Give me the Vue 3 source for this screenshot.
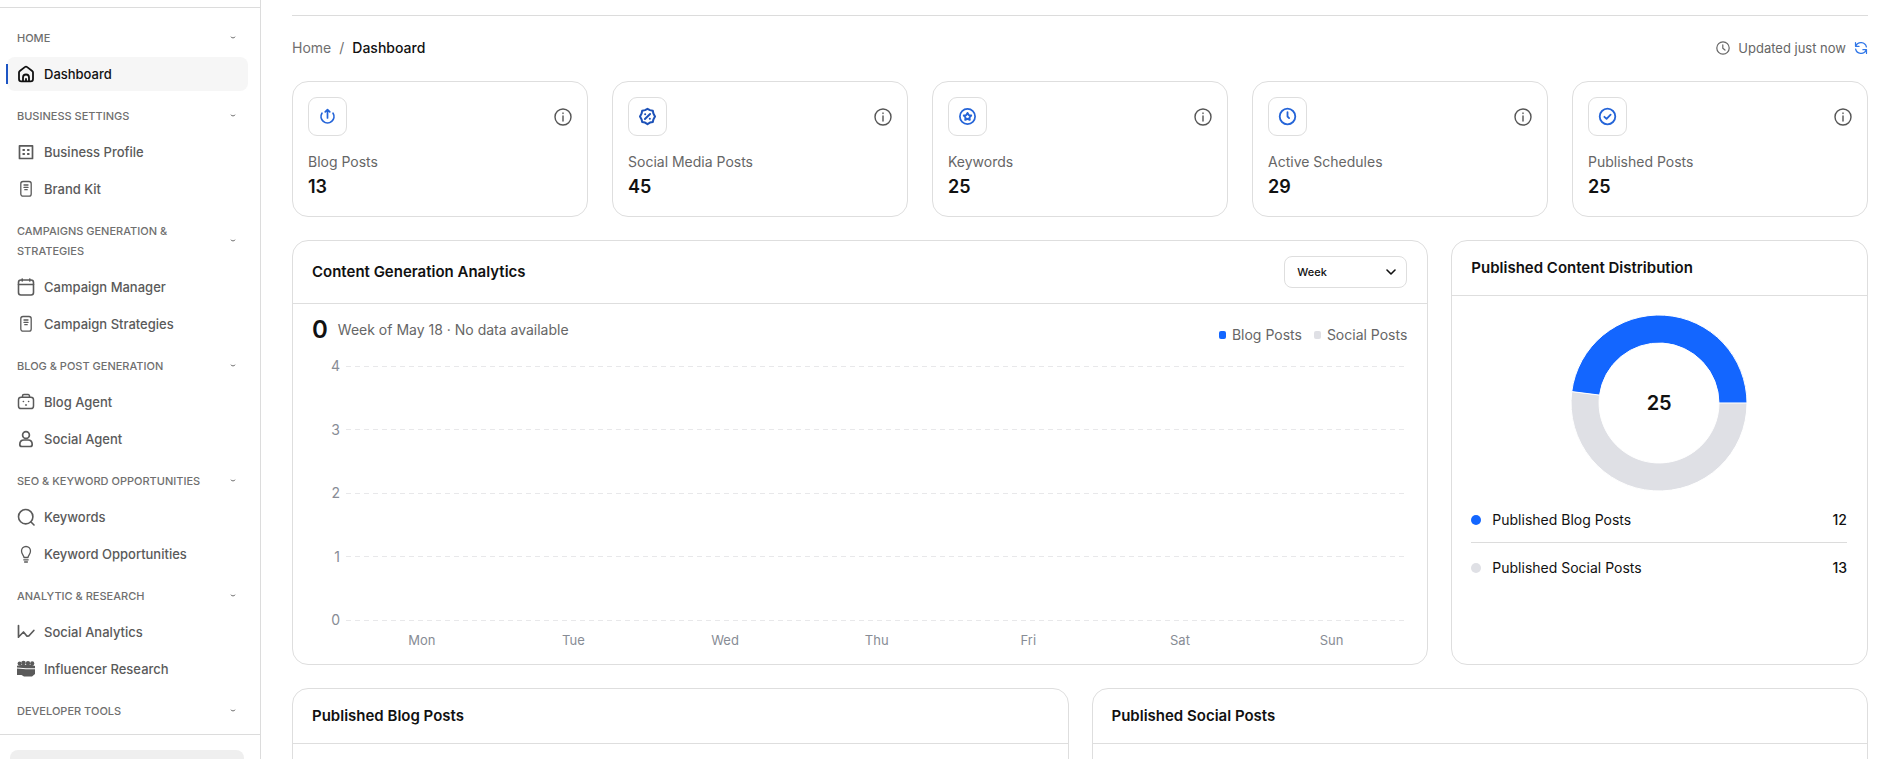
<script setup>
import { computed, ref } from 'vue'

const sections = [
  { title: 'Home', items: [{ label: 'Dashboard', icon: 'home', active: true }] },
  {
    title: 'Business Settings',
    items: [
      { label: 'Business Profile', icon: 'building' },
      { label: 'Brand Kit', icon: 'document' }
    ]
  },
  {
    title: 'Campaigns Generation & Strategies',
    items: [
      { label: 'Campaign Manager', icon: 'calendar' },
      { label: 'Campaign Strategies', icon: 'document' }
    ]
  },
  {
    title: 'Blog & Post Generation',
    items: [
      { label: 'Blog Agent', icon: 'bot' },
      { label: 'Social Agent', icon: 'user' }
    ]
  },
  {
    title: 'SEO & Keyword Opportunities',
    items: [
      { label: 'Keywords', icon: 'search' },
      { label: 'Keyword Opportunities', icon: 'bulb' }
    ]
  },
  {
    title: 'Analytic & Research',
    items: [
      { label: 'Social Analytics', icon: 'chart' },
      { label: 'Influencer Research', icon: 'people' }
    ]
  },
  { title: 'Developer Tools', items: [] }
]

const stats = [
  { label: 'Blog Posts', value: 13, icon: 'upload' },
  { label: 'Social Media Posts', value: 45, icon: 'percent' },
  { label: 'Keywords', value: 25, icon: 'star' },
  { label: 'Active Schedules', value: 29, icon: 'clock' },
  { label: 'Published Posts', value: 25, icon: 'check' }
]

const ticks = [4, 3, 2, 1, 0]
const days = ['Mon', 'Tue', 'Wed', 'Thu', 'Fri', 'Sat', 'Sun']
const period = ref('Week')

const distribution = [
  { label: 'Published Blog Posts', value: 12, tone: 'blue' },
  { label: 'Published Social Posts', value: 13, tone: 'gray' }
]

const total = computed(() => distribution.reduce((sum, row) => sum + row.value, 0))

// Ring segments run counter-clockwise, starting at three o'clock
const segments = computed(() => {
  let start = 0
  return distribution.map((row) => {
    const end = start + (row.value / total.value) * 2 * Math.PI
    const point = (radius, angle) =>
      `${88 + radius * Math.cos(angle)} ${88 - radius * Math.sin(angle)}`
    const large = end - start > Math.PI ? 1 : 0
    const d = `M${point(88, start)} A88 88 0 ${large} 0 ${point(88, end)} L${point(60, end)} A60 60 0 ${large} 1 ${point(60, start)} Z`
    start = end
    return { tone: row.tone, d }
  })
})
</script>

<template>
  <div class="layout">
    <aside class="sidebar">
      <div class="sidebar-top"></div>
      <nav class="nav">
        <section v-for="section in sections" :key="section.title" class="nav-section">
          <button type="button" class="nav-heading">
            <span>{{ section.title }}</span>
            <svg class="nav-chevron" viewBox="0 0 6 4"><path d="M1 1c1 1.3 3 1.3 4 0" /></svg>
          </button>
          <ul v-if="section.items.length" class="nav-list">
            <li v-for="item in section.items" :key="item.label">
              <a href="#" class="nav-item" :class="{ active: item.active }">
                <svg class="nav-icon" viewBox="0 0 18 18" aria-hidden="true">
                  <g v-if="item.icon === 'home'" stroke-width="1.8">
                    <path d="M2 7.6a2 2 0 0 1 .8-1.6l5-3.9a2 2 0 0 1 2.4 0l5 3.9a2 2 0 0 1 .8 1.6V14a2.4 2.4 0 0 1-2.4 2.4H4.4A2.4 2.4 0 0 1 2 14z" />
                    <path d="M6 16.2V12.500a3 3 0 0 1 6 0v3.700M9 14v2" />
                  </g>
                  <g v-else-if="item.icon === 'building'">
                    <path d="M2.500 2.800h13v12.700h-13z" stroke-width="1.700" />
                    <path d="M6.200 7h1M10.800 7h1M6.200 11h1M10.800 11h1" stroke-width="1.800" />
                  </g>
                  <g v-else-if="item.icon === 'document'" stroke-width="1.300">
                    <rect x="3.800" y="1.500" width="10.400" height="14.600" rx="2.200" />
                    <path d="M7 5h4M7 7.400h4M7.800 9.700h2.400" />
                  </g>
                  <g v-else-if="item.icon === 'calendar'" stroke-width="1.600">
                    <rect x="1.500" y="2" width="15" height="15" rx="2.400" />
                    <path d="M1.500 6.500h15M5.200 1v2M12.800 1v2" />
                  </g>
                  <g v-else-if="item.icon === 'bot'" stroke-width="1.500">
                    <rect x="1.500" y="4.200" width="15" height="11.300" rx="2.600" />
                    <path d="M5.500 4V3a1.400 1.400 0 0 1 1.400-1.400h4.200A1.400 1.400 0 0 1 12.500 3v1M6.300 8.500h.2M11.500 8.500h.2M8.600 12h.8" />
                  </g>
                  <g v-else-if="item.icon === 'user'" stroke-width="1.700">
                    <circle cx="9" cy="5" r="3.400" />
                    <path d="M2.800 14.500c0-3 2-4.500 4.200-4.500h4c2.200 0 4.200 1.500 4.200 4.500 0 1.300-.8 2-2 2H4.800c-1.200 0-2-.7-2-2z" />
                  </g>
                  <g v-else-if="item.icon === 'search'" stroke-width="1.600">
                    <circle cx="8.700" cy="8.700" r="7.200" />
                    <path d="m14 14 3 3" />
                  </g>
                  <g v-else-if="item.icon === 'bulb'" stroke-width="1.300">
                    <path d="M7 12.500c0-2-2.500-3.200-2.500-6.500a4.500 4.500 0 0 1 9 0c0 3.300-2.500 4.500-2.500 6.500zM6.800 14.800h4.400M7.600 17h2.800" />
                  </g>
                  <g v-else-if="item.icon === 'chart'" stroke-width="1.700">
                    <path d="M1.500 2.500v11.700M1.500 14l5-5 3.500 4.200 2-.4 4.800-5.300" />
                  </g>
                  <g v-else class="solid">
                    <circle cx="2.600" cy="3.400" r="2" /><circle cx="6.500" cy="3" r="2.300" />
                    <circle cx="11" cy="3.200" r="2.200" /><circle cx="15.200" cy="3.400" r="2.100" />
                    <path d="M0 5.800 4 5h11l3 1v2.200H9L0 7.500zM0 8.500l9 .7h9V14l-3 2.500H7L4.500 15H0z" />
                  </g>
                </svg>
                <span>{{ item.label }}</span>
              </a>
            </li>
          </ul>
        </section>
      </nav>
      <div class="sidebar-footer">
        <div class="account"></div>
      </div>
    </aside>

    <main class="main">
      <div class="topbar">
        <nav class="crumbs" aria-label="Breadcrumb">
          <a href="#">Home</a>
          <span>/</span>
          <strong>Dashboard</strong>
        </nav>
        <div class="updated">
          <svg viewBox="0 0 14 14" aria-hidden="true">
            <circle cx="7" cy="7" r="6.200" />
            <path d="M6.800 3.800v3.400L9 9" />
          </svg>
          <span>Updated just now</span>
          <button type="button" class="refresh" aria-label="Refresh">
            <svg viewBox="0 0 14 14">
              <path d="M1.500 1.500v3.800h3.600M1.800 5A5.600 5.600 0 0 1 12.400 6M12.500 12.500V8.700H8.900M12.200 9A5.600 5.600 0 0 1 1.600 8" />
            </svg>
          </button>
        </div>
      </div>

      <div class="stats">
        <article v-for="stat in stats" :key="stat.label" class="card stat">
          <div class="stat-top">
            <span class="stat-badge">
              <svg viewBox="0 0 20 20" aria-hidden="true">
                <g v-if="stat.icon === 'upload'" stroke-width="1.800">
                  <path d="M4.200 6.500a6.800 6.800 0 1 0 11.600 0M10 11.500V2.800M7.600 5.100 10 2.700l2.400 2.400" />
                </g>
                <g v-else-if="stat.icon === 'percent'" class="dark" stroke-width="2.100">
                  <path d="m10 1.900 2.600 1.400 3 .6.600 3L17.900 10l-1.700 3.100-.6 2.700-3 .6L10 18.100l-2.600-1.700-3-.6-.6-2.700L2.100 10l1.700-3.100.6-3 3-.6z" />
                  <path d="m7.300 12.700 5.400-5.400M7.500 7.600h.1M12.400 12.400h.1" />
                </g>
                <g v-else-if="stat.icon === 'star'" stroke-width="1.800">
                  <circle cx="10" cy="10" r="8" />
                  <path d="m10 6.200 1.300 2.300 2.600.5-1.800 1.900.3 2.600L10 12.400l-2.400 1.100.3-2.600L6.100 9l2.600-.5z" stroke-width="2" />
                </g>
                <g v-else-if="stat.icon === 'clock'" stroke-width="1.900">
                  <circle cx="10" cy="10" r="8.200" />
                  <path d="M10 5.500V10l1.700 1.700" />
                </g>
                <g v-else stroke-width="1.900">
                  <circle cx="10" cy="10" r="8.200" />
                  <path d="m6.700 10.300 2.300 2.200 4.300-4.500" />
                </g>
              </svg>
            </span>
            <button type="button" class="info" :aria-label="`About ${stat.label}`">
              <svg viewBox="0 0 18 18">
                <circle cx="9" cy="9" r="8" />
                <path d="M9 8v5M9 5v.5" />
              </svg>
            </button>
          </div>
          <span class="stat-label">{{ stat.label }}</span>
          <strong class="stat-value">{{ stat.value }}</strong>
        </article>
      </div>

      <div class="row analytics-row">
        <section class="card analytics">
          <header class="card-head tall">
            <h2>Content Generation Analytics</h2>
            <div class="select-wrap">
              <select v-model="period" aria-label="Period">
                <option>Week</option>
                <option>Month</option>
                <option>Year</option>
              </select>
              <svg viewBox="0 0 10 6" aria-hidden="true"><path d="m1 1 4 4 4-4" /></svg>
            </div>
          </header>
          <div class="analytics-body">
            <div class="summary">
              <div class="summary-text">
                <strong>0</strong>
                <span>Week of May 18 · No data available</span>
              </div>
              <ul class="legend">
                <li><i class="blue"></i>Blog Posts</li>
                <li><i class="gray"></i>Social Posts</li>
              </ul>
            </div>
            <div class="plot">
              <div v-for="tick in ticks" :key="tick" class="tick">
                <span>{{ tick }}</span>
                <div class="gridline"></div>
              </div>
            </div>
            <div class="days">
              <span v-for="day in days" :key="day">{{ day }}</span>
            </div>
          </div>
        </section>

        <section class="card">
          <header class="card-head">
            <h2>Published Content Distribution</h2>
          </header>
          <div class="distribution-body">
            <div class="donut">
              <svg viewBox="0 0 176 176" aria-hidden="true">
                <path v-for="segment in segments" :key="segment.tone" :class="segment.tone" :d="segment.d" />
              </svg>
              <strong>{{ total }}</strong>
            </div>
            <ul class="breakdown">
              <li v-for="row in distribution" :key="row.label">
                <i :class="row.tone"></i>
                <span>{{ row.label }}</span>
                <b>{{ row.value }}</b>
              </li>
            </ul>
          </div>
        </section>
      </div>

      <div class="row">
        <section class="card posts">
          <header class="card-head"><h2>Published Blog Posts</h2></header>
        </section>
        <section class="card posts">
          <header class="card-head"><h2>Published Social Posts</h2></header>
        </section>
      </div>
    </main>
  </div>
</template>

<style>
body {
  background: #fff;
}
</style>

<style scoped>
* {
  box-sizing: border-box;
}

.layout {
  display: flex;
  height: 100vh;
  overflow: hidden;
  font-family: Inter, 'Liberation Sans', sans-serif;
  font-size: 14px;
  color: #111;
}

ul {
  list-style: none;
  margin: 0;
  padding: 0;
}

h2 {
  margin: 0;
  font-size: 15px;
  line-height: 24px;
  font-weight: 600;
}

button {
  border: 0;
  padding: 0;
  background: none;
  font: inherit;
  color: inherit;
  cursor: pointer;
}

a {
  color: inherit;
  text-decoration: none;
}

svg {
  display: block;
  flex: none;
  fill: none;
  stroke: currentColor;
  stroke-linecap: round;
  stroke-linejoin: round;
}

.sidebar {
  flex: none;
  width: 261px;
  border-right: 1px solid #dcdcdc;
}

.sidebar-top {
  height: 8px;
  border-bottom: 1px solid #dcdcdc;
}

.nav {
  padding: 20px 12px 13px 7px;
  border-bottom: 1px solid #dcdcdc;
}

.nav-section + .nav-section {
  margin-top: 15px;
}

.nav-heading {
  display: flex;
  align-items: center;
  justify-content: space-between;
  gap: 24px;
  width: 100%;
  padding: 0 12px 0 10px;
  font-size: 11px;
  line-height: 20px;
  font-weight: 500;
  text-align: left;
  text-transform: uppercase;
  color: #6f6f6f;
}

.nav-chevron {
  width: 6px;
  height: 4px;
}

.nav-list {
  display: flex;
  flex-direction: column;
  gap: 3px;
  margin-top: 9px;
}

.nav-item {
  position: relative;
  display: flex;
  align-items: center;
  gap: 9px;
  height: 34px;
  padding: 0 10px;
  border-radius: 8px;
  font-size: 13px;
  font-weight: 500;
  line-height: 20px;
  color: #5a5a5a;
}

.nav-item.active {
  background: #f6f6f6;
  color: #111;
}

.nav-item.active::before {
  content: '';
  position: absolute;
  left: -1px;
  top: 7px;
  bottom: 7px;
  width: 2px;
  background: #1d55c4;
}

.nav-icon {
  width: 18px;
  height: 18px;
}

.solid {
  fill: currentColor;
  stroke: none;
}

.sidebar-footer {
  padding: 15px 16px 15px 10px;
}

.account {
  height: 44px;
  border-radius: 8px;
  background: #efefef;
}

.main {
  flex: 1;
  min-width: 0;
  margin: 15px 23px 0 31px;
  border-top: 1px solid #dcdcdc;
}

.topbar {
  display: flex;
  align-items: center;
  justify-content: space-between;
  height: 65px;
  padding-bottom: 2px;
}

.crumbs {
  display: flex;
  gap: 8px;
  color: #6f6f6f;
}

.crumbs strong {
  font-weight: 500;
  color: #111;
}

.updated {
  display: flex;
  align-items: center;
  gap: 8px;
  font-size: 13px;
  color: #666;
}

.updated svg {
  width: 14px;
  height: 14px;
  stroke-width: 1.2;
}

.refresh {
  color: #2f76e8;
}

.card {
  border: 1px solid #dedede;
  border-radius: 16px;
  background: #fff;
}

.stats {
  display: grid;
  grid-template-columns: repeat(5, 1fr);
  gap: 24px;
}

.stat {
  display: flex;
  flex-direction: column;
  padding: 15px 15px 16px;
}

.stat-top {
  display: flex;
  align-items: center;
  justify-content: space-between;
  margin-bottom: 14px;
}

.stat-badge {
  display: grid;
  place-items: center;
  width: 39px;
  height: 39px;
  border: 1px solid #dedede;
  border-radius: 9px;
  color: #2464d8;
}

.stat-badge svg {
  width: 19px;
  height: 19px;
}

.dark {
  color: #1c51b8;
  stroke: currentColor;
}

.info {
  color: #555;
}

.info svg {
  width: 18px;
  height: 18px;
  stroke-width: 1.4;
}

.stat-label {
  line-height: 24px;
  color: #666;
}

.stat-value {
  font-size: 18px;
  line-height: 26px;
  font-weight: 600;
}

.row {
  display: grid;
  grid-template-columns: 1fr 1fr;
  gap: 23px;
  margin-top: 23px;
}

.analytics-row {
  grid-template-columns: 30fr 11fr;
}

.card-head {
  display: flex;
  align-items: center;
  justify-content: space-between;
  height: 55px;
  padding: 0 20px 0 19px;
  border-bottom: 1px solid #dedede;
}

.card-head.tall {
  height: 63px;
}

.select-wrap {
  position: relative;
}

.select-wrap select {
  appearance: none;
  width: 123px;
  height: 32px;
  padding: 0 12px;
  border: 1px solid #dedede;
  border-radius: 8px;
  background: #fff;
  font-family: inherit;
  font-size: 11px;
  font-weight: 500;
  color: #111;
}

.select-wrap svg {
  position: absolute;
  right: 11px;
  top: 13px;
  width: 10px;
  height: 6px;
  stroke-width: 1.6;
  pointer-events: none;
}

.analytics-body {
  padding: 10px 20px 14px 19px;
}

.summary {
  display: flex;
  align-items: flex-start;
  justify-content: space-between;
  height: 42px;
  color: #666;
}

.summary-text {
  display: flex;
  align-items: center;
  gap: 10px;
  line-height: 32px;
}

.summary-text strong {
  font-size: 24px;
  font-weight: 600;
  color: #111;
}

.legend {
  display: flex;
  gap: 12px;
  padding-top: 9px;
  line-height: 24px;
}

.legend li {
  display: flex;
  align-items: center;
  gap: 6px;
}

.legend i {
  width: 7px;
  height: 8px;
  border-radius: 2px;
}

i.blue,
.breakdown .blue {
  background: #1366ff;
}

i.gray,
.breakdown .gray {
  background: #dfe0e5;
}

.plot {
  display: flex;
  flex-direction: column;
  justify-content: space-between;
  height: 274px;
}

.tick {
  display: flex;
  align-items: center;
  gap: 6px;
  line-height: 20px;
  color: #878c95;
}

.tick span {
  width: 28px;
  text-align: right;
}

.gridline {
  flex: 1;
  height: 1px;
  background: repeating-linear-gradient(90deg, #e8e8ea 0 5px, transparent 5px 9px);
}

.days {
  display: flex;
  padding-left: 34px;
  font-size: 13px;
  line-height: 20px;
  color: #878c95;
}

.days span {
  flex: 1;
  text-align: center;
}

.distribution-body {
  padding: 19px 20px 0 19px;
}

.donut {
  display: grid;
  place-items: center;
}

.donut > * {
  grid-area: 1 / 1;
}

.donut svg {
  width: 176px;
  height: 176px;
  stroke: #fff;
}

.donut .blue {
  fill: #1366ff;
}

.donut .gray {
  fill: #dfe0e5;
}

.donut strong {
  font-size: 20px;
  font-weight: 600;
}

.breakdown {
  margin-top: 4px;
}

.breakdown li {
  display: flex;
  align-items: center;
  padding: 13px 0 10px;
  line-height: 24px;
}

.breakdown li + li {
  border-top: 1px solid #dcdcdc;
}

.breakdown i {
  width: 10px;
  height: 10px;
  margin-right: 11px;
  border-radius: 50%;
}

.breakdown b {
  margin-left: auto;
  font-weight: 500;
}

.posts {
  height: 320px;
}
</style>
